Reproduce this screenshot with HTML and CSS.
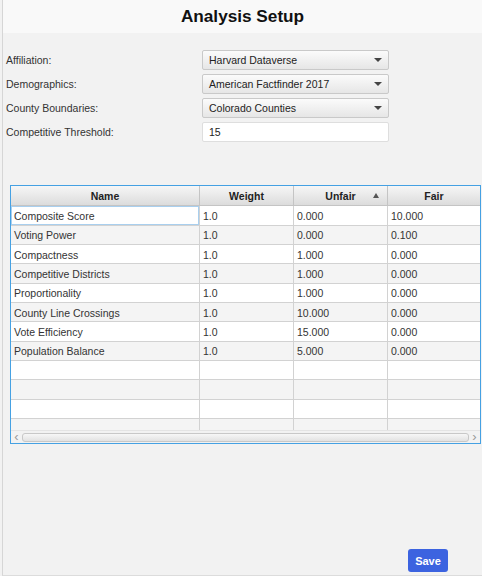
FILE: index.html
```html
<!DOCTYPE html>
<html>
<head>
<meta charset="utf-8">
<title>Analysis Setup</title>
<link rel="stylesheet" href="styles.css">
</head>
<body>
<div class="app">
  <header class="title-bar"><h1 class="title">Analysis Setup</h1></header>

  <section class="form">
    <div class="form-row">
      <label class="label">Affiliation:</label>
      <div class="select"><span>Harvard Dataverse</span><i class="caret"></i></div>
    </div>
    <div class="form-row">
      <label class="label">Demographics:</label>
      <div class="select"><span>American Factfinder 2017</span><i class="caret"></i></div>
    </div>
    <div class="form-row">
      <label class="label">County Boundaries:</label>
      <div class="select"><span>Colorado Counties</span><i class="caret"></i></div>
    </div>
    <div class="form-row">
      <label class="label">Competitive Threshold:</label>
      <div class="input">15</div>
    </div>
  </section>

  <section class="grid">
    <div class="grid-view">
      <div class="row head">
        <div class="cell hcell">Name</div>
        <div class="cell hcell">Weight</div>
        <div class="cell hcell sorted">Unfair<i class="sort-up"></i></div>
        <div class="cell hcell">Fair</div>
      </div>
      <div class="row">
        <div class="cell focus">Composite Score</div><div class="cell">1.0</div><div class="cell">0.000</div><div class="cell">10.000</div>
      </div>
      <div class="row alt">
        <div class="cell">Voting Power</div><div class="cell">1.0</div><div class="cell">0.000</div><div class="cell">0.100</div>
      </div>
      <div class="row">
        <div class="cell">Compactness</div><div class="cell">1.0</div><div class="cell">1.000</div><div class="cell">0.000</div>
      </div>
      <div class="row alt">
        <div class="cell">Competitive Districts</div><div class="cell">1.0</div><div class="cell">1.000</div><div class="cell">0.000</div>
      </div>
      <div class="row">
        <div class="cell">Proportionality</div><div class="cell">1.0</div><div class="cell">1.000</div><div class="cell">0.000</div>
      </div>
      <div class="row alt">
        <div class="cell">County Line Crossings</div><div class="cell">1.0</div><div class="cell">10.000</div><div class="cell">0.000</div>
      </div>
      <div class="row">
        <div class="cell">Vote Efficiency</div><div class="cell">1.0</div><div class="cell">15.000</div><div class="cell">0.000</div>
      </div>
      <div class="row alt">
        <div class="cell">Population Balance</div><div class="cell">1.0</div><div class="cell">5.000</div><div class="cell">0.000</div>
      </div>
      <div class="row"><div class="cell"></div><div class="cell"></div><div class="cell"></div><div class="cell"></div></div>
      <div class="row alt"><div class="cell"></div><div class="cell"></div><div class="cell"></div><div class="cell"></div></div>
      <div class="row"><div class="cell"></div><div class="cell"></div><div class="cell"></div><div class="cell"></div></div>
      <div class="row alt"><div class="cell"></div><div class="cell"></div><div class="cell"></div><div class="cell"></div></div>
    </div>
    <div class="hscroll">
      <span class="arrow">&#8249;</span>
      <div class="track"><div class="thumb"></div></div>
      <span class="arrow">&#8250;</span>
    </div>
  </section>

  <footer class="footer">
    <button class="save">Save</button>
  </footer>
</div>
</body>
</html>
```

FILE: styles.css
```css
html, body {
  margin: 0;
  padding: 0;
}

body {
  background: #f2f2f2;
  font-family: "Liberation Sans", Arial, sans-serif;
  font-size: 10.5px;
  color: #333;
}

.app {
  box-sizing: border-box;
  height: 576px;
  margin-left: 2px;
  border-left: 1px solid #d6d6d6;
  border-bottom: 1px solid #dcdcdc;
  background: #f2f2f2;
  display: flex;
  flex-direction: column;
}

.title-bar {
  height: 33px;
  background: #f9f9f9;
  display: flex;
  align-items: center;
  justify-content: center;
}

.title {
  margin: 0;
  font-size: 17.2px;
  font-weight: bold;
  color: #111;
}

.form {
  padding: 17px 0 0 3px;
  display: flex;
  flex-direction: column;
  gap: 4px;
}

.form-row {
  display: grid;
  grid-template-columns: 196px 187px;
  height: 20px;
  align-items: center;
}

.label {
  color: #333;
}

.select,
.input {
  box-sizing: border-box;
  height: 20px;
  border: 1px solid #cfcfcf;
  border-radius: 2px;
  padding: 0 6px;
  display: flex;
  align-items: center;
  color: #222;
}

.select {
  background: linear-gradient(#fbfbfb, #e6e6e6);
  border-color: #c9c9c9;
  justify-content: space-between;
}

.input {
  background: #fff;
  border-color: #dedede;
}

.caret {
  width: 0;
  height: 0;
  border-left: 4px solid transparent;
  border-right: 4px solid transparent;
  border-top: 4px solid #444;
}

.grid {
  margin: 43px 0 0 7px;
  width: 471px;
  box-sizing: border-box;
  border: 1px solid #45a1e3;
  background: #fff;
}

.grid-view {
  height: 244px;
  overflow: hidden;
}

.row {
  display: grid;
  grid-template-columns: 189px 94px 94px 92px;
  height: 19.33px;
  background: #fff;
}

.row.alt {
  background: #f4f4f4;
}

.row.head {
  height: 20.33px;
}

.cell {
  box-sizing: border-box;
  border-right: 1px solid #d2d2d2;
  border-bottom: 1.3px solid #d2d2d2;
  padding: 1px 3px 0;
  display: flex;
  align-items: center;
  white-space: nowrap;
  overflow: hidden;
  color: #333;
}

.cell:last-child {
  border-right: none;
}

.cell.focus {
  box-shadow: inset 0 0 0 1px #a9cfee;
}

.hcell {
  background: linear-gradient(#f6f6f6, #dcdcdc);
  border-right-color: #c4c4c4;
  border-bottom-color: #c4c4c4;
  justify-content: center;
  font-weight: bold;
  color: #222;
}

.hcell.sorted {
  position: relative;
}

.sort-up {
  position: absolute;
  right: 8px;
  top: 7px;
  width: 0;
  height: 0;
  border-left: 3.5px solid transparent;
  border-right: 3.5px solid transparent;
  border-bottom: 5px solid #555;
}

.hscroll {
  height: 12px;
  display: flex;
  align-items: center;
  background: #f2f2f2;
  border-top: 1px solid #e4e4e4;
  color: #999;
  font-size: 13px;
}

.arrow {
  width: 11px;
  text-align: center;
  line-height: 12px;
}

.track {
  flex: 1;
  height: 9px;
  display: flex;
}

.thumb {
  flex: 1;
  box-sizing: border-box;
  border: 1px solid #c8c8c8;
  border-radius: 3px;
  background: linear-gradient(#f7f7f7, #e2e2e2);
}

.footer {
  margin-top: auto;
  display: flex;
  justify-content: flex-end;
  padding: 0 34px 3px 0;
}

.save {
  width: 40px;
  height: 23px;
  border: none;
  border-radius: 3px;
  background: #3c63e0;
  color: #fff;
  font-family: "Liberation Sans", Arial, sans-serif;
  font-size: 11px;
  font-weight: bold;
  padding: 0;
}
```
